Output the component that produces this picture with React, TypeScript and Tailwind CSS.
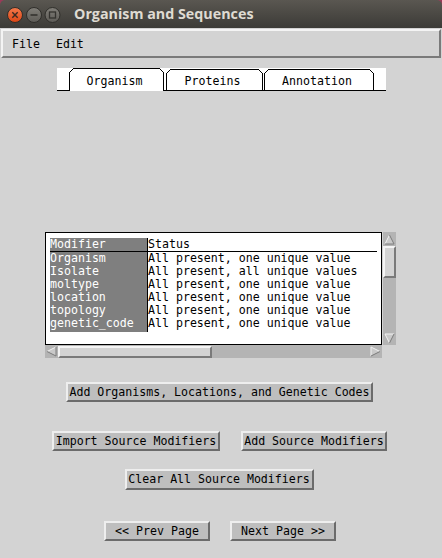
import React from "react";

const ROWS: [string, string][] = [
  ["Organism", "All present, one unique value"],
  ["Isolate", "All present, all unique values"],
  ["moltype", "All present, one unique value"],
  ["location", "All present, one unique value"],
  ["topology", "All present, one unique value"],
  ["genetic_code", "All present, one unique value"],
];

function TitleButtons() {
  return (
    <svg width="62" height="28" viewBox="0 0 62 28" className="shrink-0">
      <defs>
        <linearGradient id="red" x1="0" y1="0" x2="0" y2="1">
          <stop offset="0" stopColor="#f47a4c" />
          <stop offset="1" stopColor="#dc4514" />
        </linearGradient>
        <linearGradient id="gray" x1="0" y1="0" x2="0" y2="1">
          <stop offset="0" stopColor="#807e78" />
          <stop offset="1" stopColor="#5d5b56" />
        </linearGradient>
      </defs>
      <circle cx="15" cy="15" r="7.5" fill="url(#red)" stroke="#2f2e2a" strokeWidth="1" />
      <path d="M12.3 12.3 L17.7 17.7 M17.7 12.3 L12.3 17.7" stroke="#3a2a22" strokeWidth="1.4" />
      <circle cx="34" cy="15" r="7.5" fill="url(#gray)" stroke="#2f2e2a" strokeWidth="1" />
      <path d="M30.5 15 H37.5" stroke="#34332f" strokeWidth="1.6" />
      <circle cx="52.5" cy="15" r="7.5" fill="url(#gray)" stroke="#2f2e2a" strokeWidth="1" />
      <rect x="49.5" y="12" width="6" height="6" fill="none" stroke="#34332f" strokeWidth="1.3" />
    </svg>
  );
}

function TabOutline() {
  return (
    <>
      <span className="absolute left-0 top-[4px] bottom-0 w-px bg-black" />
      <span className="absolute right-0 top-[4px] bottom-0 w-px bg-black" />
      <span className="absolute left-[4px] right-[4px] top-0 h-px bg-black" />
      <svg className="absolute left-0 top-0" width="5" height="5">
        <line x1="0.5" y1="4.5" x2="4.5" y2="0.5" stroke="black" strokeWidth="1" />
      </svg>
      <svg className="absolute right-0 top-0" width="5" height="5">
        <line x1="0.5" y1="0.5" x2="4.5" y2="4.5" stroke="black" strokeWidth="1" />
      </svg>
    </>
  );
}

function Tab({ label, active, w }: { label: string; active?: boolean; w: string }) {
  return (
    <div
      className={
        active
          ? `relative ${w} h-[23px] flex items-center justify-center pr-[4px] pt-[4px]`
          : `relative ${w} h-[22px] border-b border-black flex items-center justify-center pr-[4px] pt-[4px]`
      }
    >
      <TabOutline />
      <span className="relative">{label}</span>
    </div>
  );
}

function Arrow({ dir }: { dir: "up" | "down" | "left" | "right" }) {
  const pts = {
    up: "5.5,1 10,10 1,10",
    down: "1,1 10,1 5.5,10",
    left: "1,5.5 10,1 10,10",
    right: "1,1 10,5.5 1,10",
  }[dir];
  const light = {
    up: "M1,10 L5.5,1",
    down: "M1,1 L10,1 M1,1 L5.5,10",
    left: "M1,5.5 L10,1",
    right: "M1,10 L1,1 L10,5.5",
  }[dir];
  const dark = {
    up: "M5.5,1 L10,10 L1,10",
    down: "M10,1 L5.5,10",
    left: "M1,5.5 L10,10 L10,1",
    right: "M10,5.5 L1,10",
  }[dir];
  return (
    <svg width="11" height="11" viewBox="0 0 11 11" className="shrink-0">
      <polygon points={pts} fill="#c9c9c9" />
      <path d={light} stroke="#f2f2f2" strokeWidth="1" fill="none" />
      <path d={dark} stroke="#7c7c7c" strokeWidth="1" fill="none" />
    </svg>
  );
}

function Btn({ label, w, h }: { label: string; w: string; h: string }) {
  return (
    <div
      className={`${w} ${h} flex items-center justify-center pt-[1px] bg-[#bebebe] border-2 border-t-[#eeeeee] border-l-[#eeeeee] border-r-[#6b6b6b] border-b-[#6b6b6b] text-black whitespace-pre`}
    >
      {label}
    </div>
  );
}

export default function App() {
  return (
    <div className="w-[442px] h-[558px] bg-[#9b3a58] flex flex-col font-['DejaVu_Sans_Mono',monospace] text-[11.6px] text-black">
      <div className="h-[28px] shrink-0 rounded-t-[5px] bg-gradient-to-b from-[#5a5751] to-[#3c3b37] flex items-center">
        <TitleButtons />
        <span className="ml-[12px] pt-[1px] font-['Open_Sans',sans-serif] font-bold text-[14.3px] text-[#dfdbd2] leading-none">
          Organism and Sequences
        </span>
      </div>

      <div className="flex-1 bg-[#d3d3d3] flex flex-col">
        <div className="mt-[1px] ml-[1px] w-[440px] h-[29px] border-2 border-t-[#f4f4f4] border-l-[#f4f4f4] border-r-[#7a7a7a] border-b-[#7a7a7a] flex items-center pl-[9px] pt-[2px] gap-[16px]">
          <span>File</span>
          <span>Edit</span>
        </div>

        <div className="mt-[10px] ml-[57px] w-[329px] h-[23px] bg-white flex items-end">
          <div className="w-[12px] h-full border-b border-black" />
          <Tab label="Organism" active w="w-[95px]" />
          <div className="w-[2px] h-full border-b border-black" />
          <Tab label="Proteins" w="w-[97px]" />
          <div className="w-[1px] h-full border-b border-black" />
          <Tab label="Annotation" w="w-[110px]" />
          <div className="flex-1 h-full border-b border-black" />
        </div>

        <div className="mt-[141px] ml-[45px] flex flex-col w-[351px]">
          <div className="flex h-[113px]">
            <div className="w-[337px] h-full bg-white border border-black pl-[4px] pt-[5px] leading-[12px]">
              <div className="flex w-[327px] h-[14px] border-b border-black">
                <div className="w-[98px] bg-[#7f7f7f] text-white border-r border-black">Modifier</div>
                <div>Status</div>
              </div>
              {ROWS.map(([m, s]) => (
                <div key={m} className="flex h-[13px] last:h-[15px]">
                  <div className="w-[98px] bg-[#7f7f7f] text-white border-r border-black">{m}</div>
                  <div className="whitespace-pre">{s}</div>
                </div>
              ))}
            </div>
            <div className="w-[14px] h-full flex flex-col pl-[1px]">
              <div className="flex-1 bg-[#b4b4b4] flex flex-col items-center pt-[2px] pb-[1px]">
                <Arrow dir="up" />
                <div className="mt-[1px] w-[13px] h-[32px] bg-[#d3d3d3] border-2 border-t-[#f4f4f4] border-l-[#f4f4f4] border-r-[#7a7a7a] border-b-[#7a7a7a]" />
                <div className="flex-1" />
                <Arrow dir="down" />
              </div>
            </div>
          </div>
          <div className="w-[337px] h-[13px] bg-[#b4b4b4] flex items-center pl-[1px] pr-[1px]">
            <Arrow dir="left" />
            <div className="ml-[1px] w-[154px] h-[12px] bg-[#d3d3d3] border-2 border-t-[#f4f4f4] border-l-[#f4f4f4] border-r-[#7a7a7a] border-b-[#7a7a7a]" />
            <div className="flex-1" />
            <Arrow dir="right" />
          </div>
        </div>

        <div className="mt-[24px] flex justify-center pr-[3px]">
          <Btn label="Add Organisms, Locations, and Genetic Codes" w="w-[307px]" h="h-[20px]" />
        </div>

        <div className="mt-[29px] flex justify-center gap-[21px] pr-[3px]">
          <Btn label="Import Source Modifiers" w="w-[168px]" h="h-[20px]" />
          <Btn label="Add Source Modifiers" w="w-[146px]" h="h-[20px]" />
        </div>

        <div className="mt-[18px] flex justify-center pr-[4px]">
          <Btn label="Clear All Source Modifiers" w="w-[189px]" h="h-[21px]" />
        </div>

        <div className="mt-[31px] flex justify-center gap-[20px] pr-[2px]">
          <Btn label="<< Prev Page" w="w-[106px]" h="h-[20px]" />
          <Btn label="Next Page >>" w="w-[106px]" h="h-[20px]" />
        </div>
      </div>
    </div>
  );
}
